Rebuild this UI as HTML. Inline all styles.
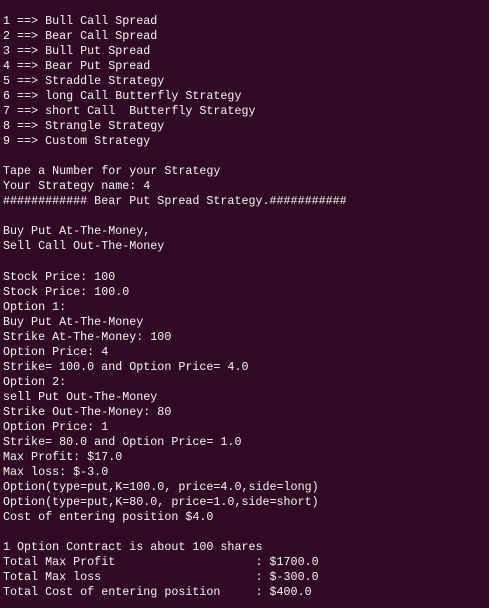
<!DOCTYPE html>
<html><head><meta charset="utf-8"><style>
html,body{margin:0;padding:0;background:#300a24;width:489px;height:608px;overflow:hidden}
pre{margin:0;position:absolute;left:3px;top:14px;font-family:"Liberation Mono","DejaVu Sans Mono",monospace;font-size:11.7px;line-height:15.03px;color:#f4f4f4;white-space:pre}
</style></head><body><pre>1 ==> Bull Call Spread
2 ==> Bear Call Spread
3 ==> Bull Put Spread
4 ==> Bear Put Spread
5 ==> Straddle Strategy
6 ==> long Call Butterfly Strategy
7 ==> short Call  Butterfly Strategy
8 ==> Strangle Strategy
9 ==> Custom Strategy

Tape a Number for your Strategy
Your Strategy name: 4
############ Bear Put Spread Strategy.###########

Buy Put At-The-Money,
Sell Call Out-The-Money

Stock Price: 100
Stock Price: 100.0
Option 1:
Buy Put At-The-Money
Strike At-The-Money: 100
Option Price: 4
Strike= 100.0 and Option Price= 4.0
Option 2:
sell Put Out-The-Money
Strike Out-The-Money: 80
Option Price: 1
Strike= 80.0 and Option Price= 1.0
Max Profit: $17.0
Max loss: $-3.0
Option(type=put,K=100.0, price=4.0,side=long)
Option(type=put,K=80.0, price=1.0,side=short)
Cost of entering position $4.0

1 Option Contract is about 100 shares
Total Max Profit                    : $1700.0
Total Max loss                      : $-300.0
Total Cost of entering position     : $400.0</pre></body></html>
